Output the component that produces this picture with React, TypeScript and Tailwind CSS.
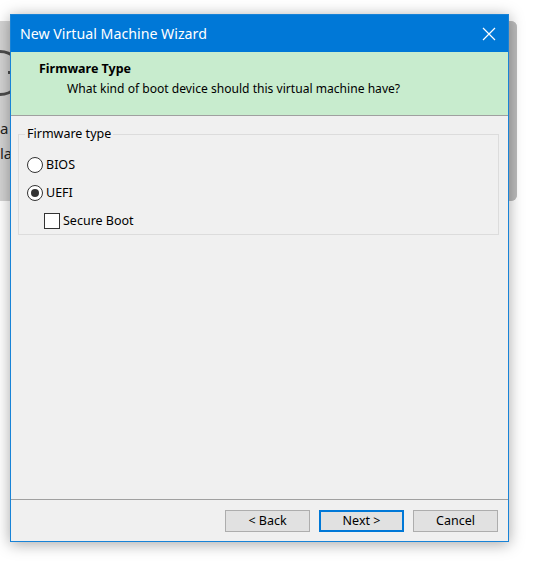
import React from "react";

const font = { fontFamily: '"Noto Sans", "Segoe UI", sans-serif' };

function Radio({ checked, label }: { checked?: boolean; label: string }) {
  return (
    <div className="flex items-center h-[16px]">
      <span className="w-[16px] h-[16px] rounded-full border border-[#333] bg-white flex items-center justify-center">
        {checked && <span className="w-[8px] h-[8px] rounded-full bg-[#333]" />}
      </span>
      <span className="ml-[3px] text-[12.5px] text-black leading-none">{label}</span>
    </div>
  );
}

function Button({ label, primary }: { label: string; primary?: boolean }) {
  return (
    <button
      className={`w-[85px] h-[22px] bg-[#e1e1e1] text-[12.5px] text-black leading-none ${
        primary ? "border-2 border-[#0078d7]" : "border border-[#adadad]"
      }`}
    >
      {label}
    </button>
  );
}

export default function App() {
  return (
    <div className="relative w-[539px] h-[564px] bg-white overflow-hidden" style={font}>
      {/* window behind the wizard */}
      <div className="absolute left-[-300px] top-[21px] w-[817px] h-[180px] bg-[#d3d3d3] rounded-[6px] overflow-hidden">
        <div className="absolute left-[277px] top-[29px] w-[46px] h-[46px] rounded-full border-[3px] border-[#4d4d4d]">
          <div className="absolute left-[28px] top-[18px] w-[10px] h-[3px] bg-[#4d4d4d]" />
        </div>
        <div className="absolute left-[300px] top-[100px] text-[15px] text-[#222] leading-none">a</div>
        <div className="absolute left-[300px] top-[125px] text-[15px] text-[#222] leading-none">la</div>
        <div className="absolute right-0 top-0 w-[16px] h-full bg-[#bcbcbc]" />
      </div>

      {/* wizard dialog */}
      <div className="absolute left-[10px] top-[14px] w-[499px] h-[528px] border border-[#1883d7] bg-[#f0f0f0] flex flex-col shadow-[0_2px_14px_rgba(0,0,0,0.35)]">
        <div className="h-[37px] bg-[#0078d7] flex items-center justify-between pl-[9px] pr-[10px] shrink-0">
          <span className="text-[14.2px] text-white">New Virtual Machine Wizard</span>
          <svg width="14" height="14" viewBox="0 0 14 14" className="mr-[2px]">
            <path d="M1 1L13 13M13 1L1 13" stroke="white" strokeWidth="1.2" />
          </svg>
        </div>
        <div className="h-[64px] bg-[#c8ecce] border-b border-[#a0a0a0] shrink-0 pt-[8px]">
          <div className="pl-[28px] text-[12.5px] font-bold text-black leading-[18px]">Firmware Type</div>
          <div className="pl-[56px] mt-[2px] text-[12.1px] text-black leading-[18px]">
            What kind of boot device should this virtual machine have?
          </div>
        </div>

        <div className="flex-1 pl-[7px] pr-[9px] pt-[18px]">
          <div className="relative border border-[#dcdcdc] h-[101px] pl-[8px] pt-[22px]">
            <span className="absolute left-[6px] top-[-9px] px-[2px] bg-[#f0f0f0] text-[12.5px] text-black leading-[16px]">
              Firmware type
            </span>
            <div className="flex flex-col gap-[12px]">
              <Radio label="BIOS" />
              <Radio label="UEFI" checked />
              <div className="flex items-center h-[16px] ml-[17px]">
                <span className="w-[16px] h-[16px] border border-[#333] bg-white" />
                <span className="ml-[3px] text-[12.5px] text-black leading-none">Secure Boot</span>
              </div>
            </div>
          </div>
        </div>

        <div className="h-[42px] border-t border-[#a0a0a0] shrink-0 flex items-start justify-end gap-[9px] pt-[10px] pr-[10px]">
          <Button label="< Back" />
          <Button label="Next >" primary />
          <Button label="Cancel" />
        </div>
      </div>
    </div>
  );
}
